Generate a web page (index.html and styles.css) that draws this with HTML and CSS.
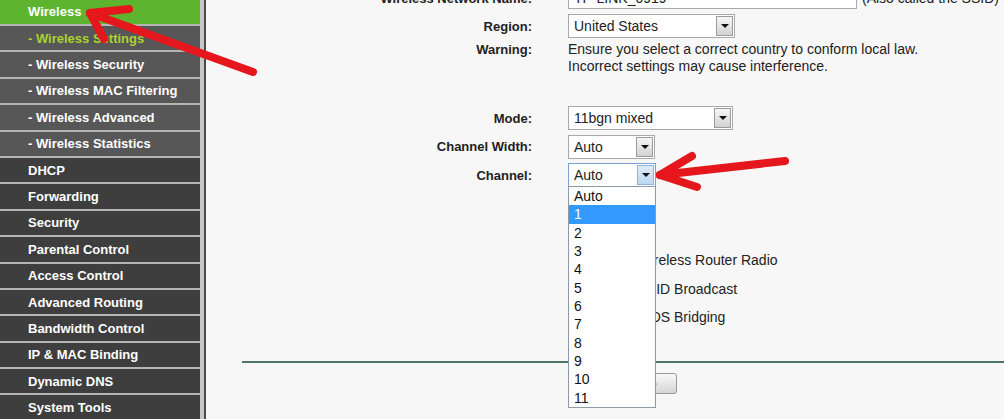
FILE: index.html
```html
<!DOCTYPE html>
<html>
<head>
<meta charset="utf-8">
<link rel="stylesheet" href="styles.css">
</head>
<body>
<div class="page">
  <nav class="sidebar">
    <div class="nav-list">
      <div class="item active">Wireless</div>
      <div class="item sub current">- Wireless Settings</div>
      <div class="item sub">- Wireless Security</div>
      <div class="item sub">- Wireless MAC Filtering</div>
      <div class="item sub">- Wireless Advanced</div>
      <div class="item sub">- Wireless Statistics</div>
      <div class="item">DHCP</div>
      <div class="item">Forwarding</div>
      <div class="item">Security</div>
      <div class="item">Parental Control</div>
      <div class="item">Access Control</div>
      <div class="item">Advanced Routing</div>
      <div class="item">Bandwidth Control</div>
      <div class="item">IP &amp; MAC Binding</div>
      <div class="item">Dynamic DNS</div>
      <div class="item">System Tools</div>
    </div>
  </nav>
  <main class="main">
    <div class="form">
      <div class="row">
        <div class="label">Wireless Network Name:</div>
        <div class="value"><div class="textbox">TP-LINK_0919</div><span class="hint">(Also called the SSID)</span></div>
      </div>
      <div class="row">
        <div class="label">Region:</div>
        <div class="value"><div class="select w-region"><span>United States</span><span class="btn"></span></div></div>
      </div>
      <div class="row warning-row">
        <div class="label">Warning:</div>
        <div class="value warning-text">Ensure you select a correct country to conform local law.<br>Incorrect settings may cause interference.</div>
      </div>
      <div class="row tall first-group">
        <div class="label">Mode:</div>
        <div class="value"><div class="select w-mode"><span>11bgn mixed</span><span class="btn"></span></div></div>
      </div>
      <div class="row tall">
        <div class="label">Channel Width:</div>
        <div class="value"><div class="select w-small"><span>Auto</span><span class="btn"></span></div></div>
      </div>
      <div class="row tall">
        <div class="label">Channel:</div>
        <div class="value">
          <div class="select w-channel focused"><span>Auto</span><span class="btn"></span>
            <ul class="dropdown">
              <li>Auto</li>
              <li class="selected">1</li>
              <li>2</li>
              <li>3</li>
              <li>4</li>
              <li>5</li>
              <li>6</li>
              <li>7</li>
              <li>8</li>
              <li>9</li>
              <li>10</li>
              <li>11</li>
            </ul>
          </div>
        </div>
      </div>
      <div class="row tall check-group">
        <div class="label"></div>
        <div class="value"><span class="checkbox"></span>Enable Wireless Router Radio</div>
      </div>
      <div class="row tall">
        <div class="label"></div>
        <div class="value"><span class="checkbox"></span>Enable SSID Broadcast</div>
      </div>
      <div class="row tall">
        <div class="label"></div>
        <div class="value"><span class="checkbox"></span>Enable WDS Bridging</div>
      </div>
      <div class="divider"></div>
      <div class="row button-row">
        <div class="label"></div>
        <div class="value"><button class="save">Save</button></div>
      </div>
    </div>
  </main>
</div>
<svg class="arrows" width="1004" height="419" viewBox="0 0 1004 419">
  <g stroke="#e5171c" stroke-width="8" stroke-linecap="round" fill="none">
    <line x1="90" y1="13" x2="253" y2="72"/>
    <line x1="90" y1="13" x2="129" y2="9"/>
    <line x1="90" y1="13" x2="104" y2="39"/>
    <line x1="660" y1="175" x2="785" y2="161"/>
    <line x1="660" y1="175" x2="692" y2="156"/>
    <line x1="660" y1="175" x2="697" y2="187"/>
  </g>
</svg>
</body>
</html>
```
FILE: styles.css
```css
html, body {
  margin: 0;
  padding: 0;
}
body {
  position: relative;
  width: 1004px;
  height: 419px;
  overflow: hidden;
  background: #f7f7f7;
  font-family: "Liberation Sans", Arial, sans-serif;
  color: #222;
}
.page {
  display: flex;
  height: 419px;
  overflow: hidden;
}
.sidebar {
  width: 200px;
  flex: none;
  background: #b5b5b5;
  border-right: 4px solid #c6c6c6;
}
.nav-list {
  display: flex;
  flex-direction: column;
  gap: 2px;
  margin-top: -0.4px;
}
.item {
  height: 24.4px;
  display: flex;
  align-items: center;
  padding-left: 28px;
  background: #3e3e3e;
  color: #fff;
  font-weight: bold;
  font-size: 13px;
  white-space: nowrap;
}
.item.active {
  background: #5db42f;
}
.item.sub {
  background: #575757;
}
.item.current {
  color: #a9d32d;
}
.main {
  flex: 1;
  border-left: 2px solid #4a4a4a;
  position: relative;
}
.form {
  margin-top: -16px;
}
.row {
  display: grid;
  grid-template-columns: 326px 1fr;
  column-gap: 36px;
  align-items: center;
  height: 28px;
}
.row.tall {
  height: 28.5px;
}
.label {
  text-align: right;
  font-weight: bold;
  font-size: 13px;
  color: #222;
  white-space: nowrap;
}
.value {
  display: flex;
  align-items: center;
  font-size: 14px;
  white-space: nowrap;
}
.warning-row {
  height: 34px;
  align-items: start;
}
.warning-row .label {
  line-height: 17px;
  padding-top: 1px;
}
.warning-text {
  display: block;
  line-height: 17px;
  padding-top: 1px;
}
.first-group {
  margin-top: 29.75px;
}
.check-group {
  margin-top: 56.75px;
}
.textbox {
  box-sizing: border-box;
  width: 289px;
  height: 22px;
  border: 1px solid #a9a9a9;
  background: #fff;
  padding-left: 5px;
  display: flex;
  align-items: center;
  font-size: 14px;
}
.hint {
  margin-left: 5px;
}
.select {
  position: relative;
  box-sizing: border-box;
  height: 24px;
  border: 1px solid #a9a9a9;
  background: #fff;
  display: flex;
  align-items: center;
  justify-content: space-between;
  padding-left: 5px;
  font-size: 14px;
}
.w-region { width: 167px; }
.w-mode { width: 165px; }
.w-small { width: 87px; }
.w-channel { width: 88px; }
.btn {
  box-sizing: border-box;
  width: 17px;
  height: 20px;
  margin-right: 1px;
  border: 1px solid #9c9c9c;
  background: linear-gradient(#f6f6f6, #d2d2d2);
  display: flex;
  align-items: center;
  justify-content: center;
}
.btn::after {
  content: "";
  border-left: 4px solid transparent;
  border-right: 4px solid transparent;
  border-top: 4px solid #111;
}
.select.focused {
  border-color: #7ba2cf;
}
.select.focused .btn {
  border-color: #8fb4dc;
  background: linear-gradient(#dcebf8, #bcd8f1);
}
.dropdown {
  position: absolute;
  top: 22px;
  left: -1px;
  width: 88px;
  box-sizing: border-box;
  margin: 0;
  padding: 0;
  list-style: none;
  background: #fff;
  border: 1px solid #8d99a6;
  z-index: 5;
}
.dropdown li {
  height: 18.33px;
  line-height: 18.33px;
  padding-left: 5px;
  font-size: 14px;
  color: #111;
}
.dropdown li.selected {
  background: #3399ff;
  color: #fff;
}
.checkbox {
  box-sizing: border-box;
  width: 13px;
  height: 13px;
  margin-left: 2px;
  margin-right: 7px;
  border: 1px solid #888;
  background: #fff;
}
.divider {
  margin-top: 29px;
  margin-left: 36px;
  height: 2px;
  background: #4f7563;
}
.button-row {
  margin-top: 10px;
  height: 21px;
}
.save {
  margin-left: 39px;
  box-sizing: border-box;
  width: 70px;
  height: 21px;
  border: 1px solid #9a9a9a;
  border-radius: 3px;
  background: linear-gradient(#f7f7f7, #d6d6d6);
  font-family: "Liberation Sans", Arial, sans-serif;
  font-size: 13px;
}
.arrows {
  position: absolute;
  top: 0;
  left: 0;
  pointer-events: none;
  z-index: 10;
}
```
